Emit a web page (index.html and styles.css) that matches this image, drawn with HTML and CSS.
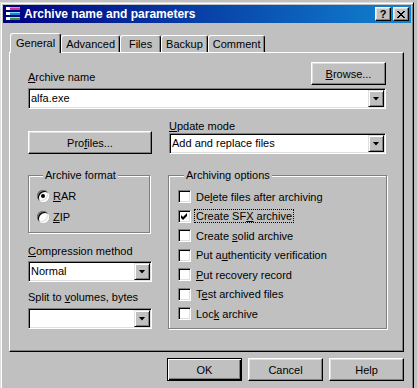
FILE: index.html
```html
<!DOCTYPE html>
<html lang="en">
<head>
    <meta charset="UTF-8">
    <meta name="viewport" content="width=device-width, initial-scale=1.0">
    <title>Archive name and parameters</title>
    <link rel="stylesheet" href="styles.css">
</head>
<body>
    <div class="window">
        <div class="titlebar">
            <svg class="app-icon" width="16" height="16" viewBox="0 0 16 16">
                <rect x="0.5" y="0.5" width="15" height="4" fill="#fff" stroke="#000080"/>
                <rect x="5" y="1" width="10" height="3" fill="#d0309a"/>
                <rect x="5" y="1" width="10" height="1" fill="#ff80c0"/>
                <rect x="0.5" y="5.5" width="15" height="4" fill="#fff" stroke="#000080"/>
                <rect x="5" y="6" width="10" height="3" fill="#2080e0"/>
                <rect x="5" y="6" width="10" height="1" fill="#80e0ff"/>
                <rect x="0.5" y="10.5" width="15" height="4" fill="#fff" stroke="#000080"/>
                <rect x="5" y="11" width="10" height="3" fill="#20a040"/>
                <rect x="5" y="11" width="10" height="1" fill="#a0f080"/>
            </svg>
            <span class="title">Archive name and parameters</span>
            <div class="title-buttons">
                <span class="tbtn">?</span>
                <span class="tbtn">
                    <svg width="8" height="7" viewBox="0 0 8 7">
                        <path d="M0 0h2v1h1v1h2v-1h1v-1h2v1h-1v1h-1v1h-1v1h1v1h1v1h1v1h-2v-1h-1v-1h-2v1h-1v1h-2v-1h1v-1h1v-1h1v-1h-1v-1h-1v-1h-1z" fill="#000"/>
                    </svg>
                </span>
            </div>
        </div>

        <div class="dialog-body">
            <div class="tabs">
                <div class="tab active">General</div>
                <div class="tab">Advanced</div>
                <div class="tab">Files</div>
                <div class="tab">Backup</div>
                <div class="tab">Comment</div>
            </div>

            <div class="panel">
                <div class="name-head">
                    <label class="field-label"><u>A</u>rchive name</label>
                    <button class="btn browse"><u>B</u>rowse...</button>
                </div>
                <div class="combo name-combo"><span class="value">alfa.exe</span><span class="arrow"></span></div>

                <div class="columns mid-row">
                    <div>
                        <button class="btn profiles">Pro<u>f</u>iles...</button>
                    </div>
                    <div>
                        <label class="field-label"><u>U</u>pdate mode</label>
                        <div class="combo"><span class="value">Add and replace files</span><span class="arrow"></span></div>
                    </div>
                </div>

                <div class="columns low-row">
                    <div class="left-col">
                        <fieldset class="group format-group">
                            <legend>Archive format</legend>
                            <div class="option radio-row"><span class="radio checked"></span><span><u>R</u>AR</span></div>
                            <div class="option radio-row"><span class="radio"></span><span><u>Z</u>IP</span></div>
                        </fieldset>

                        <label class="field-label method-label"><u>C</u>ompression method</label>
                        <div class="combo small-combo"><span class="value">Normal</span><span class="arrow"></span></div>

                        <label class="field-label split-label">Split to <u>v</u>olumes, bytes</label>
                        <div class="combo small-combo split-combo"><span class="value"></span><span class="arrow"></span></div>
                    </div>

                    <fieldset class="group options-group">
                        <legend>Archiving options</legend>
                        <div class="option"><span class="check"></span><span>De<u>l</u>ete files after archiving</span></div>
                        <div class="option"><span class="check checked"><svg width="7" height="7" viewBox="0 0 7 7"><path d="M6 0v3l-4 4-2-2v-3l2 2z" fill="#000"/></svg></span><span class="focus">Create SF<u>X</u> archive</span></div>
                        <div class="option"><span class="check"></span><span>Create <u>s</u>olid archive</span></div>
                        <div class="option"><span class="check"></span><span>Put a<u>u</u>thenticity verification</span></div>
                        <div class="option"><span class="check"></span><span><u>P</u>ut recovery record</span></div>
                        <div class="option"><span class="check"></span><span>T<u>e</u>st archived files</span></div>
                        <div class="option"><span class="check"></span><span>Loc<u>k</u> archive</span></div>
                    </fieldset>
                </div>
            </div>

            <div class="actions">
                <button class="btn default">OK</button>
                <button class="btn">Cancel</button>
                <button class="btn">Help</button>
            </div>
        </div>
    </div>
</body>
</html>
```

FILE: styles.css
```css
body {
    margin: 0;
    background-color: #c0c0c0;
    font-family: "Liberation Sans", Arial, sans-serif;
    font-size: 11px;
    color: #000;
    overflow: hidden;
}
u {
    text-decoration: underline;
    text-underline-offset: 1px;
}
.window {
    width: 408px;
    height: 400px;
    margin-top: 2px;
    padding: 2px;
    border: 1px solid;
    border-color: #dfdfdf #000 #000 #dfdfdf;
    box-shadow: inset 1px 1px 0 #fff, inset -1px -1px 0 #808080;
    background-color: #c0c0c0;
}
.titlebar {
    height: 18px;
    display: flex;
    align-items: center;
    padding: 0 2px;
    background: linear-gradient(to right, #000080, #1084d0);
    color: #fff;
}
.app-icon {
    flex-shrink: 0;
    margin-right: 3px;
}
.title {
    font-size: 12px;
    font-weight: bold;
    flex: 1;
}
.title-buttons {
    display: flex;
    gap: 2px;
}
.tbtn {
    width: 16px;
    height: 14px;
    box-sizing: border-box;
    display: flex;
    align-items: center;
    justify-content: center;
    border: 1px solid;
    border-color: #fff #000 #000 #fff;
    box-shadow: inset -1px -1px 0 #808080, inset 1px 1px 0 #dfdfdf;
    background-color: #c0c0c0;
    color: #000;
    font-weight: bold;
    font-size: 11px;
    line-height: 12px;
}
.dialog-body {
    padding: 10px 7px 0 6px;
}

/* tabs */
.tabs {
    display: flex;
    align-items: flex-end;
    height: 19px;
    padding-left: 1px;
}
.tab {
    height: 17px;
    min-width: 41px;
    box-sizing: border-box;
    padding: 0 4px;
    text-align: center;
    line-height: 16px;
    border: 1px solid;
    border-color: #fff #000 transparent #fff;
    border-bottom: 0;
    border-radius: 3px 3px 0 0;
    box-shadow: inset -1px 0 0 #808080;
    background-color: #c0c0c0;
}
.tab.active {
    height: 20px;
    padding: 0 5px;
    line-height: 18px;
    margin-bottom: -1px;
}

/* page */
.panel {
    height: 300px;
    box-sizing: border-box;
    padding: 9px 17px 0 18px;
    border: 1px solid;
    border-color: #fff #000 #000 #fff;
    box-shadow: inset -1px -1px 0 #808080;
}
.field-label {
    display: block;
    line-height: 13px;
}
.name-head {
    display: flex;
    justify-content: space-between;
    align-items: flex-end;
}
.name-head .field-label {
    margin-bottom: 1px;
}
.btn {
    height: 23px;
    box-sizing: border-box;
    padding: 0;
    font-family: inherit;
    font-size: 11px;
    color: #000;
    background-color: #c0c0c0;
    border: 1px solid;
    border-color: #fff #000 #000 #fff;
    box-shadow: inset -1px -1px 0 #808080, inset 1px 1px 0 #dfdfdf;
    border-radius: 0;
}
.browse {
    width: 75px;
}
.profiles {
    width: 124px;
    margin-top: 11px;
}
.combo {
    height: 21px;
    box-sizing: border-box;
    display: flex;
    padding: 1px;
    background-color: #fff;
    border: 1px solid;
    border-color: #808080 #fff #fff #808080;
    box-shadow: inset 1px 1px 0 #000, inset -1px -1px 0 #dfdfdf;
}
.name-combo {
    margin-top: 3px;
}
.combo .value {
    flex: 1;
    padding-left: 1px;
    line-height: 17px;
}
.arrow {
    width: 16px;
    box-sizing: border-box;
    display: flex;
    align-items: center;
    justify-content: center;
    background-color: #c0c0c0;
    border: 1px solid;
    border-color: #dfdfdf #000 #000 #dfdfdf;
    box-shadow: inset 1px 1px 0 #fff, inset -1px -1px 0 #808080;
}
.arrow::after {
    content: "";
    width: 7px;
    height: 4px;
    background-color: #000;
    clip-path: polygon(0 0, 100% 0, 50% 100%);
}
.columns {
    display: grid;
    grid-template-columns: 124px 1fr;
    column-gap: 17px;
}
.mid-row {
    margin-top: 11px;
}
.low-row {
    margin-top: 15px;
    align-items: start;
}

/* group boxes */
.group {
    margin: 0;
    border: 1px solid #808080;
    box-shadow: 1px 1px 0 #fff, inset 1px 1px 0 #fff;
}
.group legend {
    margin-left: 6px;
    padding: 0 2px;
    line-height: 13px;
    background-color: #c0c0c0;
}
.format-group {
    width: 122px;
    box-sizing: border-box;
    padding: 3px 0 5px 8px;
}
.options-group {
    margin: 0 -1px;
    padding: 5px 0 4px 9px;
}
.option {
    display: flex;
    align-items: center;
    height: 19.5px;
}
.radio-row {
    height: 21px;
}
.radio {
    width: 12px;
    height: 12px;
    margin-right: 4px;
    border-radius: 50%;
    display: flex;
    align-items: center;
    justify-content: center;
    background-color: #fff;
    box-shadow: inset 1px 1px 0 #808080, inset -1px -1px 0 #fff, inset 2px 2px 0 #000, inset -2px -2px 0 #dfdfdf;
}
.radio.checked::after {
    content: "";
    width: 4px;
    height: 4px;
    border-radius: 50%;
    background-color: #000;
}
.check {
    width: 13px;
    height: 13px;
    box-sizing: border-box;
    margin-right: 5px;
    display: flex;
    align-items: center;
    justify-content: center;
    background-color: #fff;
    border: 1px solid;
    border-color: #808080 #fff #fff #808080;
    box-shadow: inset 1px 1px 0 #000, inset -1px -1px 0 #dfdfdf;
}
.focus {
    outline: 1px dotted #000;
    outline-offset: 0;
    padding: 0 1px;
    margin-left: -1px;
}
.method-label {
    margin-top: 12px;
}
.small-combo {
    margin-top: 3px;
}
.split-label {
    margin-top: 9px;
}
.split-combo {
    margin-top: 4px;
}

/* bottom buttons */
.actions {
    display: flex;
    justify-content: flex-end;
    gap: 6px;
    margin-top: 6px;
}
.actions .btn {
    width: 75px;
}
.actions .default {
    border-color: #000;
    box-shadow: inset 1px 1px 0 #fff, inset -1px -1px 0 #000, inset -2px -2px 0 #808080;
}
```
